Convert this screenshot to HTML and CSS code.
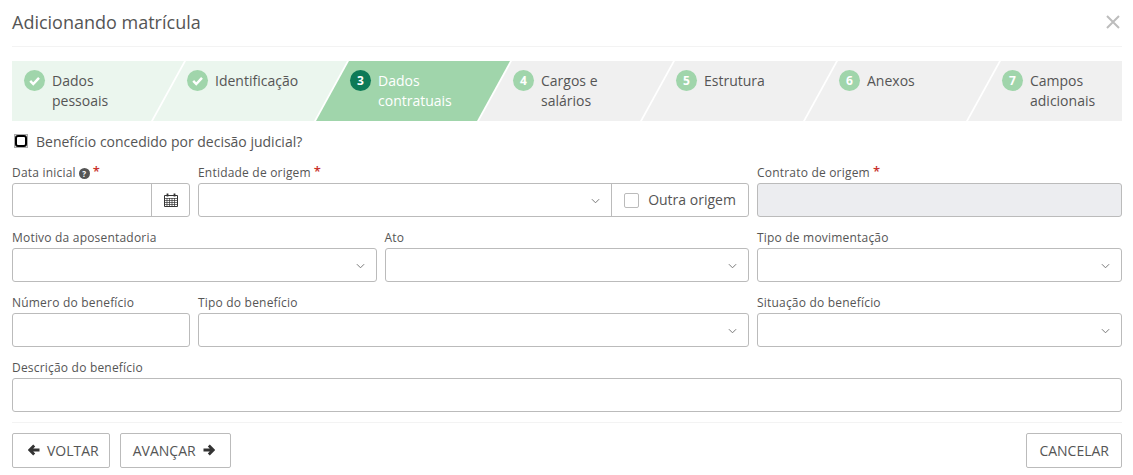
FILE: index.html
```html
<!DOCTYPE html>
<html lang="pt-BR">
<head>
  <meta charset="UTF-8" />
  <title>Adicionando matrícula</title>
  <link rel="stylesheet" href="styles.css">
</head>
<body>
  <div class="modal">
    <div class="modal-header">
      <h1>Adicionando matrícula</h1>
      <svg class="close" viewBox="0 0 14 14"><path d="M1 1l12 12M13 1L1 13"/></svg>
    </div>

    <div class="steps">
      <div class="step done first">
        <span class="num"><svg viewBox="0 0 22 22"><path d="M6.5 11.5l3.2 3.2 6-6.4"/></svg></span>
        <span class="step-text">Dados<br>pessoais</span>
      </div>
      <div class="step done">
        <span class="num"><svg viewBox="0 0 22 22"><path d="M6.5 11.5l3.2 3.2 6-6.4"/></svg></span>
        <span class="step-text">Identificação</span>
      </div>
      <div class="step active">
        <span class="num">3</span>
        <span class="step-text">Dados<br>contratuais</span>
      </div>
      <div class="step">
        <span class="num">4</span>
        <span class="step-text">Cargos e<br>salários</span>
      </div>
      <div class="step">
        <span class="num">5</span>
        <span class="step-text">Estrutura</span>
      </div>
      <div class="step">
        <span class="num">6</span>
        <span class="step-text">Anexos</span>
      </div>
      <div class="step last">
        <span class="num">7</span>
        <span class="step-text">Campos<br>adicionais</span>
      </div>
    </div>

    <label class="judicial">
      <span class="check-frame"><input type="checkbox" class="focus-check"></span>
      Benefício concedido por decisão judicial?
    </label>

    <div class="row row-narrow">
      <div class="field">
        <label>Data inicial<span class="help">?</span><span class="req">*</span></label>
        <div class="control split">
          <div class="input-part"></div>
          <div class="addon addon-cal">
            <svg class="cal" viewBox="0 0 14 14">
              <path class="cal-body" d="M.5 2.5h13v11H.5z"/>
              <path class="cal-grid" d="M.5 5.5h13M.5 7.5h13M.5 9.5h13M.5 11.5h13M3 5v8M5.5 5v8M8 5v8M10.5 5v8"/>
              <path class="cal-rings" d="M3.5 .5v3M10.5 .5v3"/>
            </svg>
          </div>
        </div>
      </div>
      <div class="field">
        <label>Entidade de origem<span class="req">*</span></label>
        <div class="control split">
          <div class="input-part select">
            <svg class="chev" viewBox="0 0 10 6"><path d="M1 1l4 4 4-4"/></svg>
          </div>
          <div class="addon addon-check">
            <span class="box"></span>
            <span class="check-text">Outra origem</span>
          </div>
        </div>
      </div>
      <div class="field">
        <label>Contrato de origem<span class="req">*</span></label>
        <div class="control disabled"></div>
      </div>
    </div>

    <div class="row row-even">
      <div class="field">
        <label>Motivo da aposentadoria</label>
        <div class="control select"><svg class="chev" viewBox="0 0 10 6"><path d="M1 1l4 4 4-4"/></svg></div>
      </div>
      <div class="field">
        <label>Ato</label>
        <div class="control select"><svg class="chev" viewBox="0 0 10 6"><path d="M1 1l4 4 4-4"/></svg></div>
      </div>
      <div class="field">
        <label>Tipo de movimentação</label>
        <div class="control select"><svg class="chev" viewBox="0 0 10 6"><path d="M1 1l4 4 4-4"/></svg></div>
      </div>
    </div>

    <div class="row row-narrow">
      <div class="field">
        <label>Número do benefício</label>
        <div class="control"></div>
      </div>
      <div class="field">
        <label>Tipo do benefício</label>
        <div class="control select"><svg class="chev" viewBox="0 0 10 6"><path d="M1 1l4 4 4-4"/></svg></div>
      </div>
      <div class="field">
        <label>Situação do benefício</label>
        <div class="control select"><svg class="chev" viewBox="0 0 10 6"><path d="M1 1l4 4 4-4"/></svg></div>
      </div>
    </div>

    <div class="row">
      <div class="field">
        <label>Descrição do benefício</label>
        <div class="control"></div>
      </div>
    </div>

    <div class="modal-footer">
      <button class="btn btn-back">
        <svg class="arrow" viewBox="0 0 12 12"><path d="M6.2 1.5L1.8 6l4.4 4.5M2 6h9.5"/></svg>
        VOLTAR
      </button>
      <button class="btn btn-next">
        AVANÇAR
        <svg class="arrow" viewBox="0 0 12 12"><path d="M5.8 1.5L10.2 6l-4.4 4.5M10 6H.5"/></svg>
      </button>
      <button class="btn btn-cancel">CANCELAR</button>
    </div>
  </div>
</body>
</html>
```

FILE: styles.css
```css
:root {
  --text-color: #555;
  --border: #bbb;
  --green: #a0d5ab;
  --green-light: #ebf6ee;
  --green-dark: #0d7a57;
  --grey-step: #f0f0f0;
}

* {
  box-sizing: border-box;
}

body {
  margin: 0;
  background: #fff;
  color: var(--text-color);
  font-family: 'Open Sans', sans-serif;
  font-size: 14px;
}

.modal {
  width: 1110px;
  margin-left: 12px;
}

.modal-header {
  height: 47px;
  border-bottom: 1px solid #f3f3f3;
  display: flex;
  align-items: center;
  justify-content: space-between;
  padding-bottom: 2px;
}

h1 {
  margin: 0;
  font-size: 18px;
  font-weight: 400;
  color: #555;
}

.close {
  width: 14px;
  height: 14px;
  margin-right: 2px;
  fill: none;
  stroke: #bdbdbd;
  stroke-width: 2;
}

/* wizard steps */
.steps {
  display: flex;
  margin-top: 14px;
  height: 60px;
}

.step {
  width: 194px;
  margin-right: -31px;
  padding: 9px 0 0 34px;
  display: flex;
  align-items: flex-start;
  gap: 7px;
  background: var(--grey-step);
  clip-path: polygon(33px 0, 100% 0, calc(100% - 33px) 100%, 0 100%);
  line-height: 20px;
}

.step.first {
  width: 172px;
  padding-left: 12px;
  clip-path: polygon(0 0, 100% 0, calc(100% - 33px) 100%, 0 100%);
}

.step.last {
  width: 154px;
  margin-right: 0;
  clip-path: polygon(33px 0, 100% 0, 100% 100%, 0 100%);
}

.step.done {
  background: var(--green-light);
}

.step.active {
  background: var(--green);
  color: #fff;
}

.num {
  flex: none;
  width: 21px;
  height: 21px;
  border-radius: 50%;
  background: var(--green);
  color: #fff;
  font-size: 12px;
  font-weight: 700;
  line-height: 21px;
  text-align: center;
}

.step.active .num {
  background: var(--green-dark);
}

.num svg {
  display: block;
  width: 21px;
  height: 21px;
  fill: none;
  stroke: #fff;
  stroke-width: 2.6;
}

.step-text {
  padding-top: 1px;
}

/* form */
.judicial {
  display: flex;
  align-items: center;
  gap: 8px;
  height: 20px;
  margin: 10px 0 0 2px;
}

.check-frame {
  display: flex;
  width: 14px;
  height: 14px;
  border: 1px solid #aaa;
  background: #eee;
}

.focus-check {
  appearance: none;
  width: 12px;
  height: 12px;
  margin: 0;
  background: #fff;
  border: 2px solid #000;
  border-radius: 3px;
}

.row {
  display: grid;
  gap: 8px;
  margin-top: 10px;
}

.judicial + .row {
  margin-top: 11px;
}

.row-narrow {
  grid-template-columns: 178px 1fr 365px;
}

.row-even {
  grid-template-columns: 1fr 1fr 365px;
}

.field label {
  display: flex;
  align-items: flex-start;
  gap: 3px;
  height: 21px;
  padding-top: 3px;
  font-size: 12px;
  line-height: 16px;
  letter-spacing: .2px;
}

.help {
  width: 11px;
  height: 11px;
  margin-top: 3px;
  border-radius: 50%;
  background: #555;
  color: #fff;
  font-size: 8px;
  font-weight: 700;
  line-height: 11px;
  text-align: center;
  letter-spacing: 0;
}

.req {
  color: #c9302c;
  font-size: 13px;
  line-height: 12px;
  font-weight: 600;
}

.control {
  height: 34px;
  border: 1px solid var(--border);
  border-radius: 3px;
  background: #fff;
  position: relative;
}

.control.disabled {
  background: #ecedf0;
}

.control.split {
  display: flex;
}

.input-part {
  flex: 1;
  position: relative;
}

.addon {
  border-left: 1px solid var(--border);
  display: flex;
  align-items: center;
  justify-content: center;
}

.addon-cal {
  width: 38px;
}

.addon-check {
  width: 137px;
  gap: 9px;
  font-size: 14px;
}

.check-text {
  margin-bottom: 2px;
}

.box {
  width: 15px;
  height: 15px;
  border: 1px solid #bbb;
  border-radius: 2px;
  background: #fff;
}

.chev {
  position: absolute;
  right: 11px;
  top: 14px;
  width: 9px;
  height: 6px;
  fill: none;
  stroke: #777;
  stroke-width: 1.1;
}

.cal {
  width: 14px;
  height: 14px;
  fill: none;
}

.cal-body {
  stroke: #333;
}

.cal-grid {
  stroke: #333;
  stroke-width: .7;
}

.cal-rings {
  stroke: #333;
  stroke-width: 1.8;
}

/* footer */
.modal-footer {
  display: flex;
  gap: 10px;
  margin-top: 10px;
  padding-top: 10px;
  border-top: 1px solid #f3f3f3;
}

.btn {
  height: 35px;
  padding-bottom: 2px;
  display: flex;
  align-items: center;
  gap: 7px;
  border: 1px solid var(--border);
  border-radius: 2px;
  background: #fff;
  color: #555;
  font-family: inherit;
  font-size: 14px;
}

.btn-back {
  padding-left: 15px;
  padding-right: 10px;
}

.btn-next {
  padding-left: 12px;
  padding-right: 15px;
}

.btn-cancel {
  margin-left: auto;
  padding-left: 12px;
  padding-right: 12px;
}

.arrow {
  width: 12px;
  height: 12px;
  fill: none;
  stroke: #333;
  stroke-width: 2.8;
}
```
